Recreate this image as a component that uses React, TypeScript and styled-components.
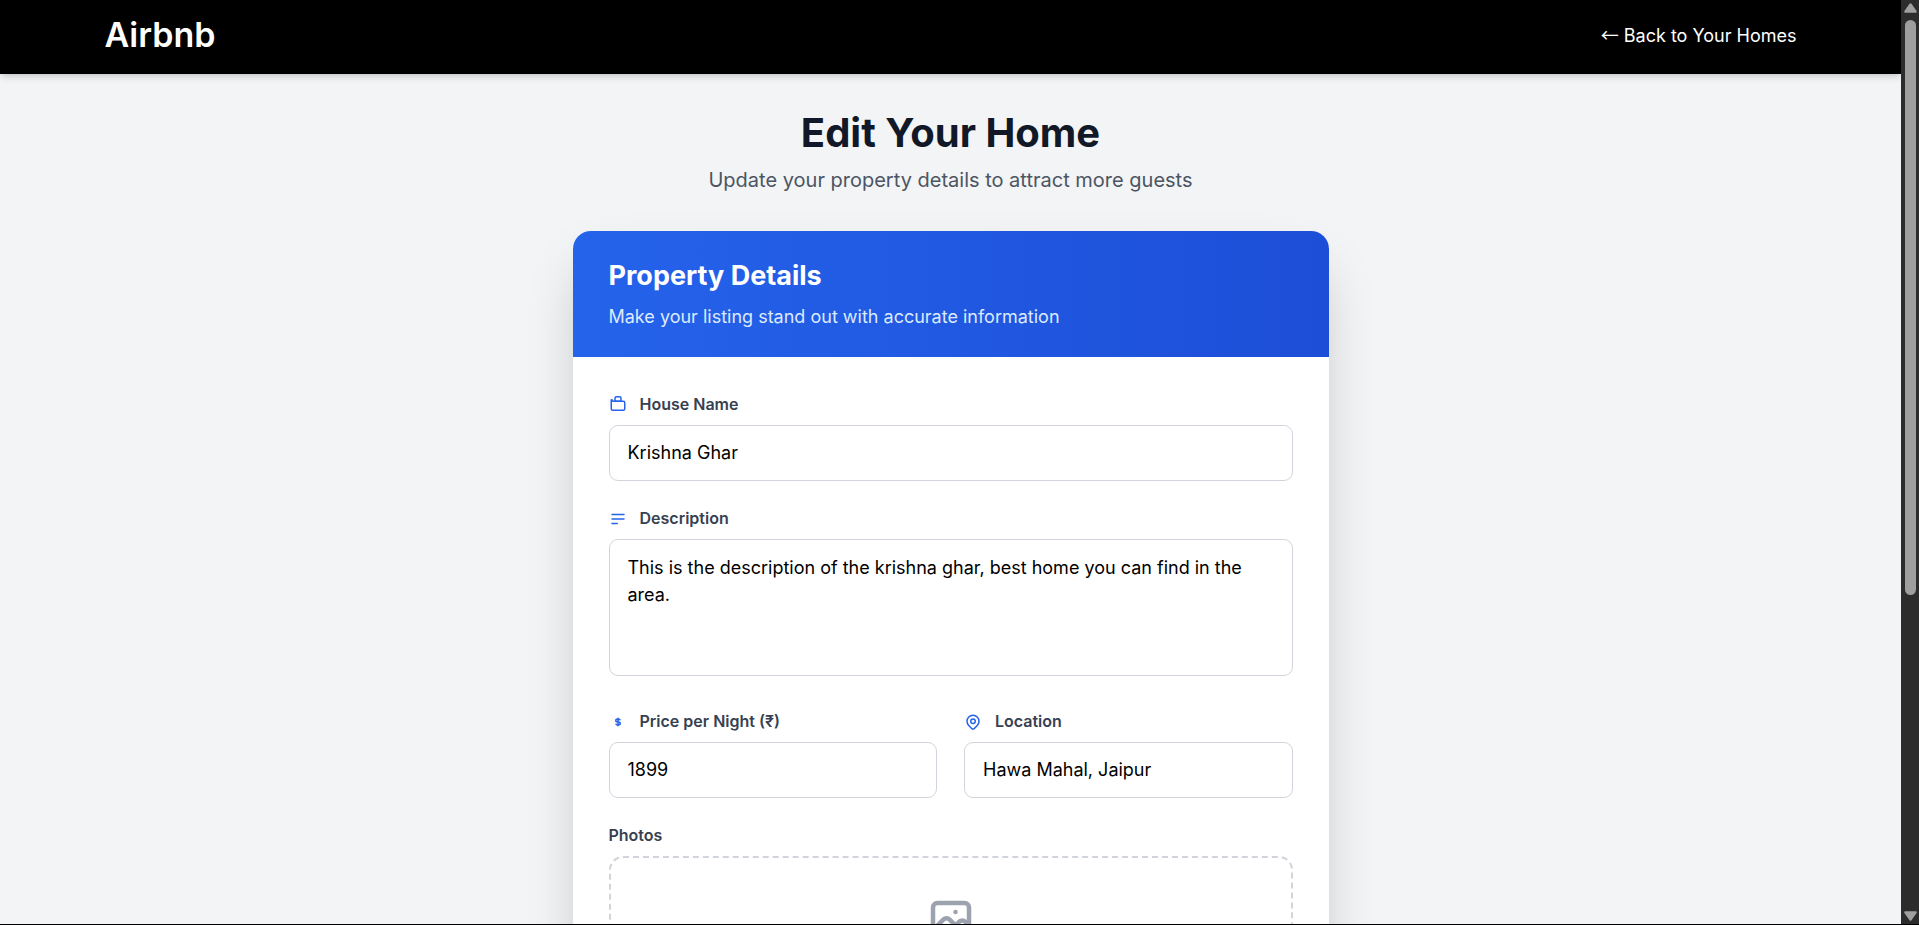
import React from "react";
import styled, { createGlobalStyle } from "styled-components";

const GlobalStyle = createGlobalStyle`
  *, *::before, *::after { box-sizing: border-box; }
  body {
    margin: 0;
    font-family: Inter, "Liberation Sans", sans-serif;
    font-size: 18px;
    line-height: 27px;
    color: #000;
  }
  h1, h2, p { margin: 0; }
`;

const Shell = styled.div`
  display: grid;
  grid-template-columns: minmax(0, 1fr) 18px;
  height: 100vh;
  border-bottom: 1px solid #000;
  background: #f3f4f6;
`;

const Page = styled.div`
  min-height: 0;
  overflow-y: auto;
  scrollbar-width: none;
`;

const SiteHeader = styled.header`
  background: #000;
  color: #fff;
  box-shadow: 0 4px 7px -1px rgba(0, 0, 0, 0.14), 0 2px 4px -2px rgba(0, 0, 0, 0.1);
`;

const HeaderInner = styled.div`
  display: flex;
  align-items: center;
  justify-content: space-between;
  max-width: 1728px;
  height: 74px;
  margin: 0 auto;
  padding: 0 18px;
`;

const Logo = styled.a`
  padding-bottom: 4px;
  font-size: 34px;
  line-height: 40px;
  font-weight: 600;
  color: inherit;
  text-decoration: none;
`;

const BackLink = styled.a`
  padding-bottom: 3px;
  color: inherit;
  text-decoration: none;
`;

const BackArrow = styled.span`
  font-family: "Noto Sans CJK JP", sans-serif;
  line-height: 1;
`;

const Main = styled.main`
  max-width: 792px;
  margin: 0 auto;
  padding: 36px 18px;
`;

const Intro = styled.div`
  display: grid;
  gap: 9px;
  margin-bottom: 34px;
  text-align: center;
`;

const Title = styled.h1`
  font-size: 40px;
  line-height: 45px;
  font-weight: 700;
  color: #111827;
`;

const Subtitle = styled.p`
  font-size: 20px;
  line-height: 33px;
  color: #4b5563;
`;

const Card = styled.section`
  overflow: hidden;
  border-radius: 18px;
  background: #fff;
  box-shadow: 0 28px 56px -14px rgba(0, 0, 0, 0.25);
`;

const CardHeader = styled.div`
  display: grid;
  gap: 9px;
  padding: 27px 36px;
  background: linear-gradient(to right, #2563eb, #1d4ed8);
`;

const CardTitle = styled.h2`
  font-size: 27px;
  line-height: 36px;
  font-weight: 700;
  color: #fff;
`;

const CardText = styled.p`
  color: #dbeafe;
`;

const Form = styled.form`
  display: grid;
  gap: 27px;
  padding: 37px 36px 36px;
`;

const FieldRow = styled.div`
  display: grid;
  grid-template-columns: repeat(2, minmax(0, 1fr));
  gap: 27px;
`;

const Field = styled.div`
  display: grid;
  gap: 9px;
`;

const Label = styled.label`
  display: flex;
  align-items: flex-start;
  gap: 13px;
  height: 22px;
  font-size: 16px;
  line-height: 20px;
  font-weight: 600;
  color: #374151;
`;

const Input = styled.input`
  width: 100%;
  height: 56px;
  padding: 0 18px 2px;
  border: 1px solid #d1d5db;
  border-radius: 9px;
  background: #fff;
  font: inherit;
  color: inherit;
`;

const TextArea = styled.textarea`
  display: block;
  width: 100%;
  margin: 0 0 8px;
  padding: 14px 18px 13px;
  border: 1px solid #d1d5db;
  border-radius: 9px;
  background: #fff;
  font: inherit;
  color: inherit;
  resize: none;
`;

const DropZone = styled.label`
  display: flex;
  justify-content: center;
  padding: 36px;
  border: 2px dashed #d1d5db;
  border-radius: 14px;
  color: #9ca3af;
  cursor: pointer;
`;

const FileInput = styled.input`
  position: absolute;
  width: 1px;
  height: 1px;
  opacity: 0;
`;

const LineIcon = styled.svg<{ $size: number }>`
  flex: none;
  width: ${(p) => p.$size}px;
  height: ${(p) => p.$size}px;
  fill: none;
  stroke: currentColor;
  stroke-width: 2;
  stroke-linecap: round;
  stroke-linejoin: round;
`;

const LabelIcon = styled(LineIcon)`
  margin-top: 2px;
  color: #2563eb;
`;

const ScrollTrack = styled.div`
  display: flex;
  flex-direction: column;
  align-items: center;
  justify-content: space-between;
  padding: 3px 0;
  background: #2c2c2c;
`;

const ScrollLane = styled.div`
  flex: 1;
  width: 11px;
  padding: 7px 0;
`;

const ScrollThumb = styled.div`
  height: 65%;
  border-radius: 6px;
  background: #9f9f9f;
`;

const Arrow = styled.svg`
  width: 13px;
  height: 10px;
  fill: #9f9f9f;
`;

const paths = {
  house: [
    "M3 7v10a2 2 0 002 2h14a2 2 0 002-2V9a2 2 0 00-2-2H5a2 2 0 00-2-2z",
    "M8 7V3a2 2 0 012-2h4a2 2 0 012 2v4H8z",
  ],
  text: ["M4 6h16M4 12h16M4 18h7"],
  dollar: [
    "M12 8c-1.657 0-3 .895-3 2s1.343 2 3 2 3 .895 3 2-1.343 2-3 2m0-8c1.11 0 2.08.402 2.599 1M12 8V7m0 1v8m0 0v1m0-1c-1.11 0-2.08-.402-2.599-1",
  ],
  pin: [
    "M17.657 16.657L13.414 20.9a1.998 1.998 0 01-2.827 0l-4.244-4.243a8 8 0 1111.314 0z",
    "M15 11a3 3 0 11-6 0 3 3 0 016 0z",
  ],
  image: [
    "M4 16l4.586-4.586a2 2 0 012.828 0L16 16m-2-2l1.586-1.586a2 2 0 012.828 0L20 14m-6-6h.01M6 20h12a2 2 0 002-2V6a2 2 0 00-2-2H6a2 2 0 00-2 2v12a2 2 0 002 2z",
  ],
};

type IconName = keyof typeof paths;

function FieldLabel({ icon, htmlFor, children }: { icon?: IconName; htmlFor: string; children: React.ReactNode }) {
  return (
    <Label htmlFor={htmlFor}>
      {icon && (
        <LabelIcon $size={18} viewBox="0 0 24 24" aria-hidden="true">
          {paths[icon].map((d) => <path key={d} d={d} />)}
        </LabelIcon>
      )}
      {children}
    </Label>
  );
}

export default function App() {
  return (
    <>
      <GlobalStyle />
      <Shell>
        <Page>
          <SiteHeader>
            <HeaderInner>
              <Logo href="#">Airbnb</Logo>
              <BackLink href="#"><BackArrow>←</BackArrow> Back to Your Homes</BackLink>
            </HeaderInner>
          </SiteHeader>
          <Main>
            <Intro>
              <Title>Edit Your Home</Title>
              <Subtitle>Update your property details to attract more guests</Subtitle>
            </Intro>
            <Card>
              <CardHeader>
                <CardTitle>Property Details</CardTitle>
                <CardText>Make your listing stand out with accurate information</CardText>
              </CardHeader>
              <Form>
                <Field>
                  <FieldLabel icon="house" htmlFor="houseName">House Name</FieldLabel>
                  <Input id="houseName" type="text" defaultValue="Krishna Ghar" />
                </Field>
                <Field>
                  <FieldLabel icon="text" htmlFor="description">Description</FieldLabel>
                  <TextArea
                    id="description"
                    rows={4}
                    spellCheck={false}
                    defaultValue="This is the description of the krishna ghar, best home you can find in the area."
                  />
                </Field>
                <FieldRow>
                  <Field>
                    <FieldLabel icon="dollar" htmlFor="price">Price per Night (₹)</FieldLabel>
                    <Input id="price" type="text" inputMode="numeric" defaultValue="1899" />
                  </Field>
                  <Field>
                    <FieldLabel icon="pin" htmlFor="location">Location</FieldLabel>
                    <Input id="location" type="text" defaultValue="Hawa Mahal, Jaipur" />
                  </Field>
                </FieldRow>
                <Field>
                  <FieldLabel htmlFor="photos">Photos</FieldLabel>
                  <DropZone>
                    <LineIcon $size={54} viewBox="0 0 24 24" aria-hidden="true">
                      {paths.image.map((d) => <path key={d} d={d} />)}
                    </LineIcon>
                    <FileInput id="photos" type="file" accept="image/*" multiple />
                  </DropZone>
                </Field>
              </Form>
            </Card>
          </Main>
        </Page>
        <ScrollTrack aria-hidden="true">
          <Arrow viewBox="0 0 13 10">
            <path d="M5.5 .8Q6.5-.4 7.5 .8L12.6 8Q13.2 9.6 11.8 9.8H1.2Q-.2 9.6 .4 8z" />
          </Arrow>
          <ScrollLane>
            <ScrollThumb />
          </ScrollLane>
          <Arrow viewBox="0 0 13 10">
            <path d="M5.5 9.2Q6.5 10.4 7.5 9.2L12.6 2Q13.2 .4 11.8 .2H1.2Q-.2 .4 .4 2z" />
          </Arrow>
        </ScrollTrack>
      </Shell>
    </>
  );
}
